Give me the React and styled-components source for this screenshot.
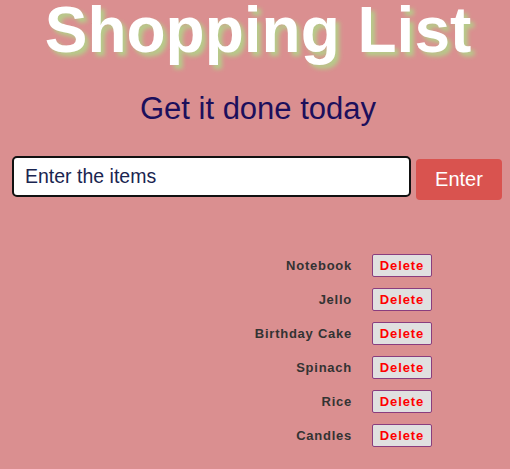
import React, { useState } from "react";
import styled, { createGlobalStyle } from "styled-components";

const GlobalStyle = createGlobalStyle`
  html, body {
    margin: 0;
    padding: 0;
    background-color: #da8f90;
    font-family: "Liberation Sans", Arial, sans-serif;
  }
`;

const Page = styled.div`
  width: 510px;
  min-height: 469px;
  display: flex;
  flex-direction: column;
  align-items: center;
`;

const Title = styled.h1`
  margin: 0;
  font-size: 64px;
  line-height: 60px;
  font-weight: 700;
  color: #ffffff;
  text-shadow: 4px 4px 4px #b6cc8a;
  margin-left: 6px;
`;

const Subtitle = styled.h2`
  margin: 31px 0 0 6px;
  font-size: 31px;
  line-height: 36px;
  font-weight: 400;
  color: #1c0f5c;
`;

const Form = styled.form`
  display: flex;
  align-items: flex-start;
  gap: 5px;
  margin-top: 29px;
  align-self: flex-start;
  padding-left: 12px;
`;

const Input = styled.input`
  box-sizing: border-box;
  width: 399px;
  height: 41px;
  border: 2px solid #111;
  border-radius: 5px;
  padding: 0 11px;
  font-family: "Liberation Sans", Arial, sans-serif;
  font-size: 19.5px;
  color: #1a2550;
  background: #fff;
  outline: none;
  &::placeholder {
    color: #1a2550;
    opacity: 1;
  }
`;

const EnterButton = styled.button`
  margin-top: 3px;
  width: 86px;
  height: 41px;
  border: none;
  border-radius: 4px;
  background-color: #d9534f;
  color: #fff;
  font-family: "Liberation Sans", Arial, sans-serif;
  font-size: 20px;
  cursor: pointer;
`;

const List = styled.ul`
  list-style: none;
  margin: 54px 0 0;
  padding: 0 78px 0 0;
  align-self: stretch;
  display: flex;
  flex-direction: column;
  gap: 11px;
`;

const Row = styled.li`
  display: flex;
  justify-content: flex-end;
  align-items: center;
  gap: 20px;
  height: 23px;
`;

const ItemName = styled.span`
  font-size: 13px;
  font-weight: 700;
  letter-spacing: 0.75px;
  color: #333;
`;

const DeleteButton = styled.button`
  box-sizing: border-box;
  width: 60px;
  height: 23px;
  padding: 0;
  border: 1px solid #8a3d7e;
  border-radius: 2px;
  background-color: #e0e0e0;
  color: #ff0000;
  font-family: "Liberation Sans", Arial, sans-serif;
  font-size: 13px;
  font-weight: 700;
  letter-spacing: 0.9px;
  cursor: pointer;
`;

const initialItems = ["Notebook", "Jello", "Birthday Cake", "Spinach", "Rice", "Candles"];

const App = () => {
  const [items, setItems] = useState(initialItems);
  const [text, setText] = useState("");

  const addItem = (e) => {
    e.preventDefault();
    if (!text.trim()) return;
    setItems([...items, text.trim()]);
    setText("");
  };

  return (
    <Page>
      <GlobalStyle />
      <Title>Shopping List</Title>
      <Subtitle>Get it done today</Subtitle>
      <Form onSubmit={addItem}>
        <Input
          placeholder="Enter the items"
          value={text}
          onChange={(e) => setText(e.target.value)}
        />
        <EnterButton type="submit">Enter</EnterButton>
      </Form>
      <List>
        {items.map((item, index) => (
          <Row key={index}>
            <ItemName>{item}</ItemName>
            <DeleteButton onClick={() => setItems(items.filter((_, i) => i !== index))}>
              Delete
            </DeleteButton>
          </Row>
        ))}
      </List>
    </Page>
  );
};

export default App;
